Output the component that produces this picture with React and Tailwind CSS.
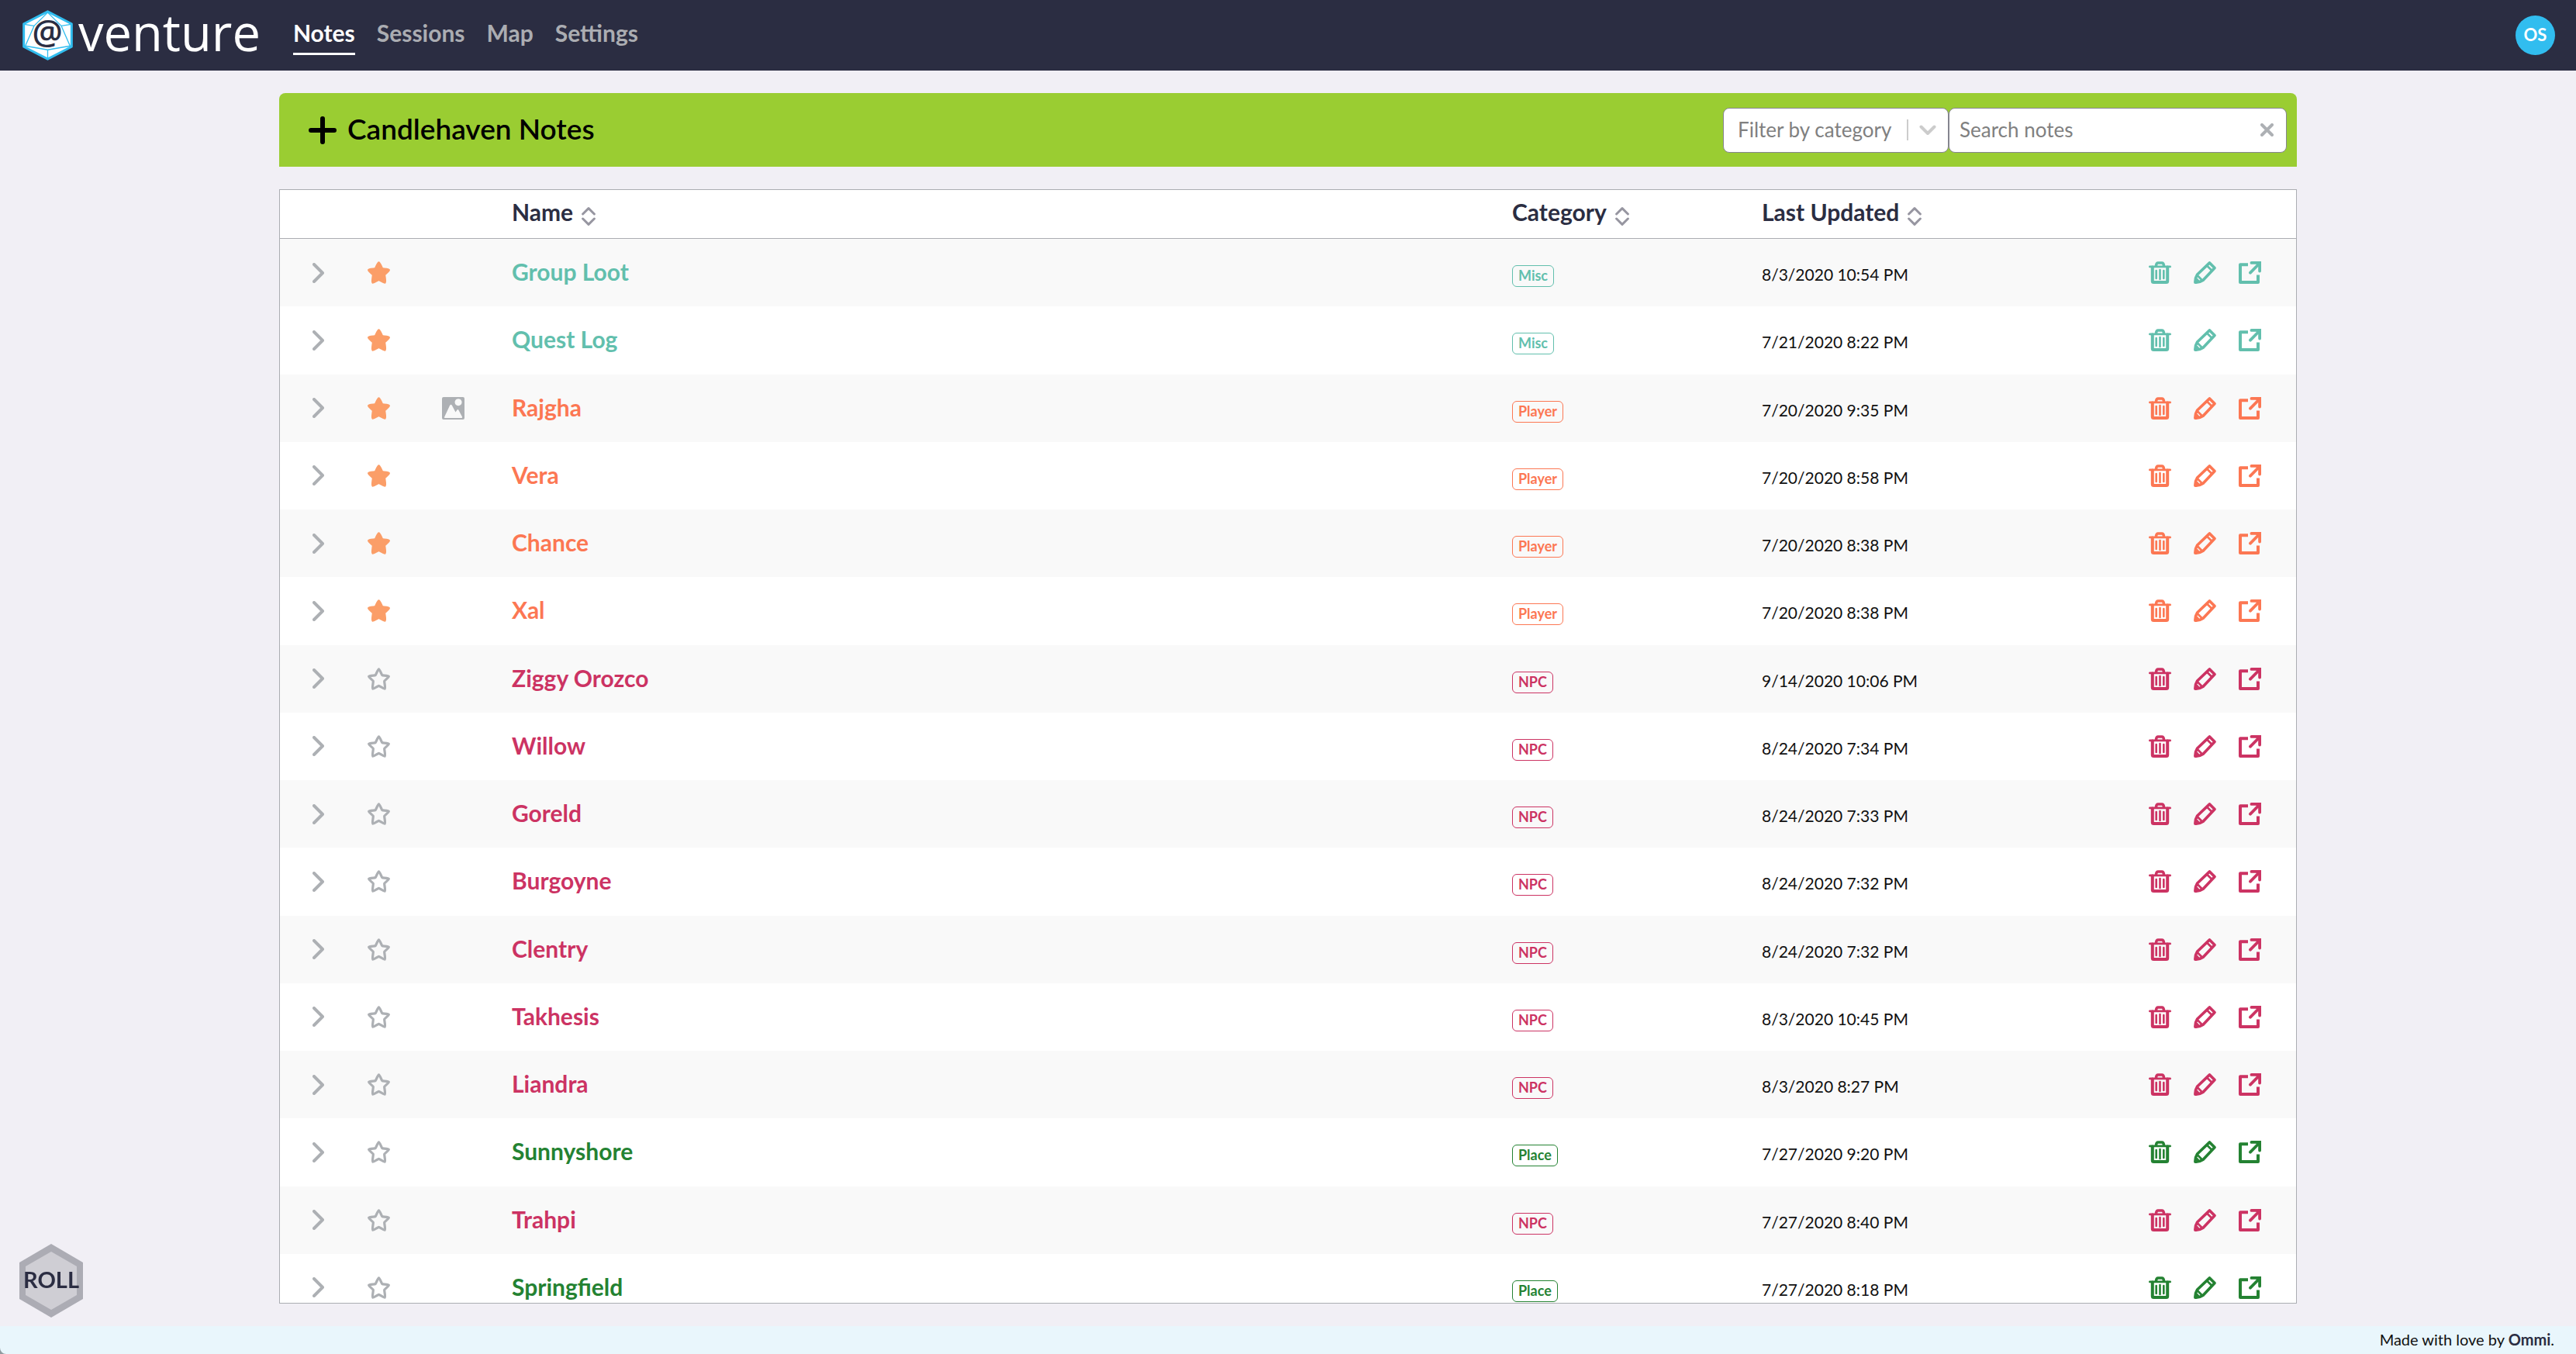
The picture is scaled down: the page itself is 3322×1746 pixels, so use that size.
import React from "react";

const NOTES = [
  ["Group Loot", "Misc", "8/3/2020 10:54 PM", true],
  ["Quest Log", "Misc", "7/21/2020 8:22 PM", true],
  ["Rajgha", "Player", "7/20/2020 9:35 PM", true, true],
  ["Vera", "Player", "7/20/2020 8:58 PM", true],
  ["Chance", "Player", "7/20/2020 8:38 PM", true],
  ["Xal", "Player", "7/20/2020 8:38 PM", true],
  ["Ziggy Orozco", "NPC", "9/14/2020 10:06 PM", false],
  ["Willow", "NPC", "8/24/2020 7:34 PM", false],
  ["Goreld", "NPC", "8/24/2020 7:33 PM", false],
  ["Burgoyne", "NPC", "8/24/2020 7:32 PM", false],
  ["Clentry", "NPC", "8/24/2020 7:32 PM", false],
  ["Takhesis", "NPC", "8/3/2020 10:45 PM", false],
  ["Liandra", "NPC", "8/3/2020 8:27 PM", false],
  ["Sunnyshore", "Place", "7/27/2020 9:20 PM", false],
  ["Trahpi", "NPC", "7/27/2020 8:40 PM", false],
  ["Springfield", "Place", "7/27/2020 8:18 PM", false],
];

const COLORS = {
  Misc: "text-[#62bfad]",
  Player: "text-[#fc7753]",
  NPC: "text-[#cc3363]",
  Place: "text-[#248232]",
};

const stroke = { fill: "none", stroke: "currentColor", strokeLinecap: "round", strokeLinejoin: "round" };

function Logo() {
  return (
    <svg viewBox="87 39 196 195" className="h-[65px] w-[65px] shrink-0 overflow-visible" role="img" aria-label="@">
      <path d="M185 44 278 92V181L185 229 92 181V92Z" fill="#fff" stroke="#31bdef" strokeWidth="9" strokeLinejoin="round" />
      <g fill="none" stroke="#31bdef" strokeWidth="4" strokeLinejoin="round">
        <path d="M185 48 132 100 98 178 185 193 272 178 238 100Z" />
        <path d="M94 94 132 100M276 94 238 100M185 193V227M94 180 98 178M276 180 272 178" />
      </g>
      <text x="184" y="171" textAnchor="middle" fontSize="132" className="fill-[#2b2d42] font-['Open_Sans',sans-serif] font-semibold">@</text>
    </svg>
  );
}

const Chevron = () => (
  <svg viewBox="0 0 15 26" className="h-[26px] w-[15px]" {...stroke} strokeWidth="4"><path d="M2 2 13 13 2 24" /></svg>
);

const STAR = "M14.5 1.8C15.6 1.8 18.2 9.2 18.9 9.7 19.6 10.2 27 9.9 27.4 11.2 27.7 12.4 22 16.4 21.7 17.3 21.4 18.2 23.3 26.3 22.3 27.1 21.3 27.8 15.5 23.4 14.5 23.4 13.5 23.4 7.7 27.8 6.7 27.1 5.7 26.3 7.6 18.2 7.3 17.3 7 16.4 1.3 12.4 1.6 11.2 2 9.9 9.4 10.2 10.1 9.7 10.8 9.2 13.4 1.8 14.5 1.8Z";
const Star = ({ filled }) => (
  <svg viewBox="0 0 29 29" className="size-[29px]" {...stroke} strokeWidth="3.2">
    <path d={STAR} fill={filled ? "currentColor" : "none"} />
  </svg>
);

const Picture = () => (
  <svg viewBox="0 0 29 29" className="size-[29px] text-[#adb0b4]" fill="currentColor" fillRule="evenodd">
    <path d="M2 0H27Q29 0 29 2V27Q29 29 27 29H2Q0 29 0 27V2Q0 0 2 0ZM21 2.2A4.5 4.5 0 1 0 21.1 2.2ZM3 26Q2.600 27 4 27H25Q26.500 27 26 25.500L21.500 17Q20.500 15 19.200 17L17.500 19.500 13 11Q11.500 8.500 10 11Z" />
  </svg>
);

const Sort = () => (
  <svg viewBox="0 0 18 24" className="h-6 w-[18px] text-[#9796a1]" {...stroke} strokeWidth="3">
    <path d="M1.600 9 9 1.600 16.400 9M1.600 15 9 22.400 16.400 15" />
  </svg>
);

const Trash = () => (
  <svg viewBox="0 0 29 29" className="size-[29px]" {...stroke} strokeWidth="3">
    <path d="M4.800 7.500V25.500Q4.800 27 6.300 27H22.700Q24.200 27 24.200 25.500V7.500" strokeWidth="4" />
    <path d="M1.400 6.900H27.600" strokeWidth="2.800" />
    <path d="M9.500 5.500Q10 2 12 2H17Q19 2 19.500 5.500" strokeWidth="3.600" />
    <path d="M9.700 12V22M14.500 11V23M19.300 12V22" strokeWidth="2.600" />
  </svg>
);

const Pencil = () => (
  <svg viewBox="0 0 29 29" className="size-[29px]" {...stroke} strokeWidth="3.600">
    <path d="M20.500 1.900 27 8.500 12.200 24.200Q7.500 27.400 1.900 27.200 1.700 21.500 4.600 17Z" />
    <path d="M4.600 18 11 24.500M17 5.500 23.500 12" strokeWidth="2.600" />
    <path d="M2 27 4.500 22 7 25Z" fill="currentColor" strokeWidth="1" />
  </svg>
);

const External = () => (
  <svg viewBox="0 0 29 29" className="size-[29px]" fill="none" stroke="currentColor" strokeWidth="4">
    <path d="M12 4.200H2V27H25V17.500" strokeLinejoin="round" />
    <path d="M15 14.700 26 3.500" strokeLinecap="round" strokeWidth="3.800" />
    <path d="M16.500 1.900H27.100V12.500" strokeLinecap="round" strokeWidth="3.800" />
    <path d="M20 1H28V9Z" fill="currentColor" strokeWidth="0" />
  </svg>
);

function NavLink({ children, active }) {
  return (
    <a
      href={"#" + children.toLowerCase()}
      aria-current={active ? "page" : undefined}
      className={"border-b-[3px] pb-2 " + (active ? "border-white text-white" : "border-transparent text-[#abadb2]")}
    >
      {children}
    </a>
  );
}

function SortHeader({ children, className }) {
  return (
    <th scope="col" className={"sticky top-0 z-10 border-b border-[#abadb2] bg-white p-0 pt-[10px] text-left align-top font-bold " + (className || "")}>
      <button type="button" className="inline-flex items-end gap-[11px]">
        {children}
        <Sort />
      </button>
    </th>
  );
}

const blankHead = "sticky top-0 z-10 border-b border-[#abadb2] bg-white p-0";

function NoteRow({ note }) {
  const [name, category, updated, starred, picture] = note;
  const color = COLORS[category];
  return (
    <tr className="h-[87px] odd:bg-[#f9f9f9] even:bg-white">
      <td className="p-0 text-center align-middle">
        <button type="button" aria-label={"Expand " + name} className="mx-auto block text-[#adb0b4]"><Chevron /></button>
      </td>
      <td className="p-0 align-middle">
        <button type="button" aria-label={"Star " + name} aria-pressed={starred} className={"mx-auto block " + (starred ? "text-[#fb9e68]" : "text-[#adb0b4]")}>
          <Star filled={starred} />
        </button>
      </td>
      <td className="p-0 align-middle">{picture && <div className="flex justify-center"><Picture /></div>}</td>
      <td className={"p-0 pt-6 pl-[9px] align-baseline font-bold " + color}>{name}</td>
      <td className={"p-0 align-baseline " + color}>
        <span className="inline-block rounded-md border border-current px-[7px] pb-[2px] text-[18px] leading-6 font-bold">{category}</span>
      </td>
      <td className="p-0 align-baseline text-[21px] text-[#111]">{updated}</td>
      <td className="p-0 pr-[45px] align-middle">
        <div className={"flex justify-end gap-[29px] " + color}>
          <button type="button" aria-label={"Delete " + name}><Trash /></button>
          <button type="button" aria-label={"Edit " + name}><Pencil /></button>
          <button type="button" aria-label={"Open " + name}><External /></button>
        </div>
      </td>
    </tr>
  );
}

export default function App() {
  return (
    <div className="flex h-screen flex-col bg-[#f1eff5] font-[Lato,sans-serif] text-[30px] leading-9">
      <header className="flex h-[91px] shrink-0 items-center bg-[#2b2d42] pr-[27px] pl-[29px] text-white">
        <a href="#home" className="flex items-center gap-[7px]">
          <Logo />
          <span className="pb-2 font-['Open_Sans',sans-serif] text-[65px] leading-none">venture</span>
        </a>
        <nav className="ml-[42px] flex gap-7 self-start pt-6 font-bold">
          <NavLink active>Notes</NavLink>
          <NavLink>Sessions</NavLink>
          <NavLink>Map</NavLink>
          <NavLink>Settings</NavLink>
        </nav>
        <button type="button" className="ml-auto flex size-[51px] items-center justify-center rounded-full bg-[#31bdef] pb-[2px] text-[22px] font-bold">OS</button>
      </header>

      <main className="mx-auto flex min-h-0 w-full max-w-[2602px] flex-1 flex-col gap-[29px] py-[29px]">
        <section className="flex h-[95px] shrink-0 items-center rounded-t-lg bg-[#9acd32] pr-[13px] pl-[38px]">
          <button type="button" aria-label="Add note">
            <svg viewBox="0 0 36 36" className="size-9" {...stroke} strokeWidth="6"><path d="M18 3V33M3 18H33" /></svg>
          </button>
          <h1 className="ml-[14px] pb-1 text-[37px] leading-[44px] font-semibold text-black">Candlehaven Notes</h1>
          <div className="relative ml-auto w-[291px]">
            <select aria-label="Filter by category" defaultValue="" className="h-[58px] w-full appearance-none rounded-lg border border-[#85858f] bg-white pb-[2px] pl-[18px] text-[26px] text-[#808080]">
              <option value="">Filter by category</option>
              <option>Misc</option>
              <option>Player</option>
              <option>NPC</option>
              <option>Place</option>
            </select>
            <div className="pointer-events-none absolute inset-y-4 right-4 flex items-center gap-[14px]">
              <span className="h-[27px] w-[2px] bg-[#ccc]" />
              <svg viewBox="0 0 22 14" className="h-[14px] w-[22px] text-[#ccc]" {...stroke} strokeWidth="4"><path d="M2.500 2.500 11 11 19.500 2.500" /></svg>
            </div>
          </div>
          <div className="relative w-[436px]">
            <input type="text" aria-label="Search notes" placeholder="Search notes" className="h-[58px] w-full rounded-lg border border-[#85858f] bg-white pb-[2px] pl-[13px] text-[26px] placeholder:text-[#808080]" />
            <button type="button" aria-label="Clear search" className="absolute top-5 right-[17px] text-[#adb0b4]">
              <svg viewBox="0 0 17 17" className="size-[17px]" {...stroke} strokeWidth="4"><path d="M2 2 15 15M15 2 2 15" /></svg>
            </button>
          </div>
        </section>

        <section className="min-h-0 flex-1 overflow-y-auto border border-[#abadb2] bg-white [scrollbar-width:none]">
          <table className="h-[1459px] w-full table-fixed border-separate border-spacing-0">
            <colgroup>
              <col className="w-[98px]" />
              <col className="w-[59px]" />
              <col className="w-[133px]" />
              <col />
              <col className="w-[322px]" />
              <col className="w-[359px]" />
              <col className="w-[330px]" />
            </colgroup>
            <thead>
              <tr className="h-[63px] text-[#2b2d42]">
                <td className={blankHead} />
                <td className={blankHead} />
                <td className={blankHead} />
                <SortHeader className="pl-[9px]">Name</SortHeader>
                <SortHeader>Category</SortHeader>
                <SortHeader>Last Updated</SortHeader>
                <td className={blankHead} />
              </tr>
            </thead>
            <tbody>
              {NOTES.map((note) => (
                <NoteRow key={note[0]} note={note} />
              ))}
            </tbody>
          </table>
        </section>
      </main>

      <footer className="shrink-0 bg-[#8f9a9f]">
        <p className="h-9 rounded-bl-lg bg-[#e9f6fc] pr-7 text-right text-[20px] leading-[34px] text-[#111]">
          Made with love by <a href="#ommi" className="font-bold text-[#2b2d42]">Ommi</a>.
        </p>
      </footer>

      <button type="button" className="fixed bottom-[47px] left-[25px] grid h-[95px] w-[82px] place-items-center font-bold text-[#2b2d42]">
        <svg viewBox="0 0 82 95" className="col-start-1 row-start-1 h-[95px] w-[82px]">
          <path d="M41 0 82 24V71L41 95 0 71V24Z" fill="#acacb4" />
          <path d="M41 10 74 29V66L41 85 8 66V29Z" fill="#cfced4" />
        </svg>
        <span className="z-10 col-start-1 row-start-1 pb-1 text-[29px]">ROLL</span>
      </button>
    </div>
  );
}
